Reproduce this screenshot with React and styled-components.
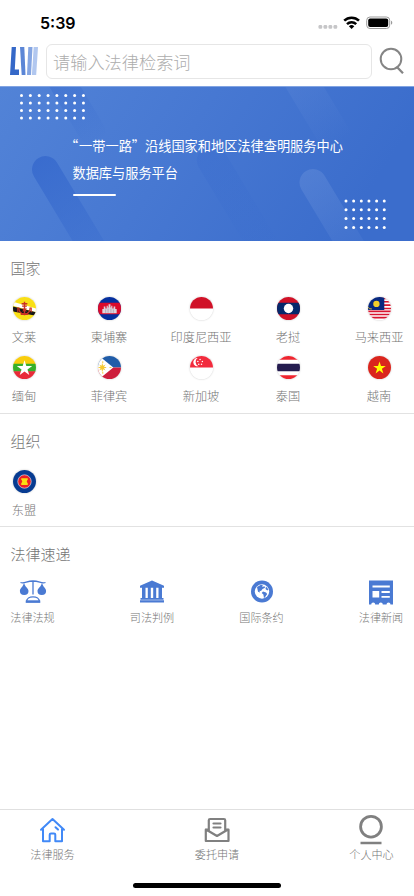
import React from 'react';
import styled, { createGlobalStyle } from 'styled-components';

const GlobalStyle = createGlobalStyle`
    * {
        box-sizing: border-box;
    }

    body {
        margin: 0;
        background-color: #fff;
        font-family: "Noto Sans CJK SC", sans-serif;
        font-weight: 300;
        color: #757575;
    }
`;

const Screen = styled.div`
    width: 414px;
    height: 896px;
    display: flex;
    flex-direction: column;
    overflow: hidden;
    background-color: #fff;
`;

const StatusBar = styled.div`
    height: 44px;
    display: flex;
    align-items: flex-start;
    justify-content: space-between;
    padding: 13px 20px 0 40px;
`;

const Time = styled.span`
    font-family: Inter, sans-serif;
    font-size: 16px;
    font-weight: 600;
    line-height: 20px;
    color: #000;
`;

const SearchBar = styled.div`
    height: 42px;
    display: flex;
    align-items: flex-start;
    padding-left: 10px;
`;

const Logo = styled.svg`
    width: 28px;
    height: 29px;
    margin: 3px 8px 0 0;
`;

const SearchInput = styled.input`
    width: 326px;
    height: 35px;
    padding: 0 6px 1px;
    border: 1px solid #e6e6e6;
    border-radius: 6px;
    outline: none;
    font-family: inherit;
    font-size: 17.2px;
    font-weight: 300;
    background-color: #fff;

    &::placeholder {
        color: #adadad;
        opacity: 1;
    }
`;

const SearchIcon = styled.svg`
    width: 26px;
    height: 28px;
    margin: 3px 0 0 7px;
`;

const Banner = styled.div`
    height: 155px;
    flex: none;
    display: grid;
    overflow: hidden;

    > * {
        grid-area: 1 / 1;
    }
`;

const BannerText = styled.div`
    z-index: 1;
    padding: 47px 0 0 72.5px;
    font-size: 13.2px;
    font-weight: 400;
    line-height: 26.5px;
    color: #fff;
    white-space: nowrap;
    text-spacing-trim: space-all;
`;

const OpenQuote = styled.span`
    margin-left: -7.5px;
    margin-right: 0.9px;
`;

const Underline = styled.div`
    width: 43px;
    height: 2px;
    margin-top: 7.5px;
    border-radius: 1px;
    background-color: #fff;
`;

const Section = styled.section`
    height: ${props => props.$height}px;
    flex: none;
    border-bottom: ${props => props.$last ? 'none' : '1px solid #e2e2e2'};
`;

const Title = styled.h2`
    height: 55px;
    margin: 0;
    padding: 15px 0 0 10.5px;
    font-size: 15px;
    font-weight: 300;
    line-height: 23px;
`;

const FlagGrid = styled.div`
    display: grid;
    grid-template-columns: 48px 122px 62px 112px 70px;
    grid-auto-rows: 59px;
    justify-items: center;
`;

const FlagItem = styled.div`
    display: flex;
    flex-direction: column;
    align-items: center;
    font-size: 12.2px;
    line-height: 18px;
    white-space: nowrap;
`;

const FlagIcon = styled.svg`
    width: 23px;
    height: 23px;
    margin: 1px 0 8px;
    border-radius: 50%;
    box-shadow: 0 0 2px rgba(0, 0, 0, 0.25);
`;

const ServiceGrid = styled.div`
    display: grid;
    grid-template-columns: 119.5px 109.5px 119.5px 44px;
    margin-top: -3px;
    padding-left: 10.5px;
`;

const ServiceItem = styled.div`
    width: 44px;
    display: flex;
    flex-direction: column;
    align-items: center;
    font-size: 11.1px;
    line-height: 16px;
    white-space: nowrap;
`;

const ServiceIcon = styled.svg`
    width: 28px;
    height: 26px;
    margin-bottom: 4px;
    fill: #4a7ad3;
`;

const TabBar = styled.nav`
    height: 87px;
    margin-top: auto;
    border-top: 1px solid #e0e0e0;
    display: flex;
    flex-direction: column;
`;

const Tabs = styled.div`
    display: grid;
    grid-template-columns: 105px 224px 85px;
    justify-items: center;
`;

const Tab = styled.div`
    display: flex;
    flex-direction: column;
    align-items: center;
    font-size: 11.1px;
    line-height: 16px;
`;

const TabIcon = styled.svg`
    width: 28px;
    height: 32px;
    margin: 4px 0 0;
    fill: none;
    stroke: ${props => props.$active ? '#4189f7' : '#808080'};
    stroke-width: 2;
    stroke-linejoin: round;
    stroke-linecap: round;
`;

const HomeIndicator = styled.div`
    width: 148px;
    height: 5px;
    margin: auto auto 8px;
    border-radius: 3px;
    background-color: #000;
`;

const STAR = 'M0-1 L.225-.309 .951-.309 .363.118 .588.809 0 .382 -.588.809 -.363.118 -.951-.309 -.225-.309Z';

const flags = {
    brunei: (
        <>
            <path fill="#f9df16" d="M0 0h24v24H0z" />
            <path fill="#fff" d="M0 5l24 7v4L0 9z" />
            <path fill="#161616" d="M0 10l24 6v3.500L0 15z" />
            <g stroke="#c93024" fill="none" strokeWidth="1.5">
                <path d="M6 11c0 9 12 9 12 0M12 5v14M9 7h6M9.500 9.500h5M8 18h8" />
                <path d="M5 11v5M19 11v5M10 12l4 3M14 12l-4 3" strokeWidth="1.2" />
            </g>
        </>
    ),
    cambodia: (
        <>
            <path fill="#052f9e" d="M0 0h24v24H0z" />
            <path fill="#dc0b2b" d="M0 6h24v12H0z" />
            <path fill="#ded5dc" d="M4.500 17v-4.500H6V10h1.700v2H9V9h1.200v2h.8V7.500h2V11h.8V9H15v3h1.300v-2H18v2.500h1.500V17z" />
            <path stroke="#8f7892" strokeWidth=".5" d="M8 13v3.500M10.500 12v4.500M13.500 12v4.500M16 13v3.500" />
        </>
    ),
    indonesia: (
        <>
            <path fill="#fff" d="M0 0h24v24H0z" />
            <path fill="#d01127" d="M0 0h24v12H0z" />
        </>
    ),
    laos: (
        <>
            <path fill="#d01127" d="M0 0h24v24H0z" />
            <path fill="#06286b" d="M0 6h24v12H0z" />
            <circle cx="12" cy="12" r="4.9" fill="#fff" />
        </>
    ),
    malaysia: (
        <>
            <path fill="#fff" d="M0 0h24v24H0z" />
            <path stroke="#d8152f" strokeWidth="1.7" d="M12 1.500h12M12 5h12M12 8.500h12M12 12h12M0 15h24M0 18.300h24M0 21.500h24" />
            <path fill="#08297f" d="M0 0h17v13.500H0z" />
            <circle cx="8.800" cy="7.200" r="3.300" fill="#f5cf2a" />
            <path fill="none" stroke="#e8c629" d="M4 12.500q-3 .5-4-2" />
        </>
    ),
    myanmar: (
        <>
            <path fill="#f9cd0c" d="M0 0h24v9H0z" />
            <path fill="#36b02b" d="M0 8h24v8.500H0z" />
            <path fill="#e82b38" d="M0 16h24v8H0z" />
            <path fill="#fff" transform="translate(12 13) scale(8.500)" d={STAR} />
        </>
    ),
    philippines: (
        <>
            <path fill="#205ca8" d="M0 0h24v12H0z" />
            <path fill="#cd1d3b" d="M0 12h24v12H0z" />
            <path fill="#fff" d="M0-1l16 13L0 25z" />
            <circle cx="4.500" cy="12" r="2.400" fill="#f5ca32" />
            <path stroke="#f5ca32" d="M4.500 8v8M.500 12h8M1.700 9.200l5.600 5.600M1.700 14.800l5.600-5.600M5 5.500v2M5 16.500v2M12 12h2" />
        </>
    ),
    singapore: (
        <>
            <path fill="#fff" d="M0 0h24v24H0z" />
            <path fill="#f22b3d" d="M0 0h24v12H0z" />
            <path fill="#fff" d="M8 2.200a4.300 4.300 0 1 0 1 8.400 4.700 4.700 0 0 1-1-8.400z" />
            <g fill="#fff">
                <circle cx="10.500" cy="3.600" r=".8" />
                <circle cx="8.200" cy="5.700" r=".8" />
                <circle cx="12.900" cy="5.700" r=".8" />
                <circle cx="9.100" cy="8.500" r=".8" />
                <circle cx="12" cy="8.500" r=".8" />
            </g>
        </>
    ),
    thailand: (
        <>
            <path fill="#fff" d="M0 0h24v24H0z" />
            <path fill="#ee252f" d="M0 0h24v4H0zM0 20h24v4H0z" />
            <path fill="#241c4f" d="M0 8h24v8H0z" />
        </>
    ),
    vietnam: (
        <>
            <path fill="#da251d" d="M0 0h24v24H0z" />
            <path fill="#ff0" transform="translate(12 12.600) scale(6.900)" d={STAR} />
        </>
    ),
    asean: (
        <>
            <path fill="#073b91" d="M0 0h24v24H0z" />
            <circle cx="12" cy="12" r="7" fill="#ed1f24" stroke="#dbe0ee" strokeWidth=".7" />
            <path fill="#f8dc12" d="M8.600 8.500h6.800v1.800q-2 1.700 0 3.600v1.800H8.600v-1.800q2-1.900 0-3.600z" />
        </>
    ),
};

const countries = [
    { flag: 'brunei', name: '文莱' },
    { flag: 'cambodia', name: '柬埔寨' },
    { flag: 'indonesia', name: '印度尼西亚' },
    { flag: 'laos', name: '老挝' },
    { flag: 'malaysia', name: '马来西亚' },
    { flag: 'myanmar', name: '缅甸' },
    { flag: 'philippines', name: '菲律宾' },
    { flag: 'singapore', name: '新加坡' },
    { flag: 'thailand', name: '泰国' },
    { flag: 'vietnam', name: '越南' },
];

const organizations = [{ flag: 'asean', name: '东盟' }];

const services = [
    {
        name: '法律法规',
        icon: (
            <>
                <path fill="none" stroke="#4a7ad3" strokeWidth="1.300" d="M1.500 3.500c4 1.500 6-1.500 12.500-1.500s8.500 3 12.500 1.500M14 2v13.500" />
                <path d="M5 3.500c.7 4.500 4.500 5.500 4.500 8.600a4.300 3.900 0 0 1-8.600 0C.9 9 4.300 8 5 3.500zM23 3.500c.7 4.500 4.100 5.500 4.100 8.600a4.300 3.900 0 0 1-8.600 0c0-3.100 3.800-4.100 4.500-8.600z" />
                <path fill="none" stroke="#4a7ad3" strokeWidth="1.400" d="M7.500 23c0-6.800 13-6.800 13 0z" />
                <path d="M6.800 21.300h14.400v2.200H6.800z" />
            </>
        ),
    },
    {
        name: '司法判例',
        icon: (
            <>
                <path d="M14 1.500L26 6.700v2.100H2V6.700zM4 8.500h3.500V20H4zM9.800 8.500h3V20h-3zM15.200 8.500h3V20h-3zM20.500 8.500H24V20h-3.500zM2.500 19h23v1.800h-23zM2 21.200h24v2.300H2z" />
            </>
        ),
    },
    {
        name: '国际条约',
        icon: (
            <>
                <circle cx="14" cy="12.500" r="11" />
                <circle cx="14" cy="12.500" r="7.200" fill="#fff" />
                <path transform="translate(0 -.5)" d="M9 8.500l4-2.300 2 .7-1 1.600 2.500-.8.500 1.600-2.500 1.200-1.500 2-1.500-.3.500 1.800-2-.7zM15 13l3 1 1.200 1.500-1.700 2.500-1.500 1.800-.6-3.800-1.700-1.500zM18 8l2.500 3-1.200 1-1.800-1.500z" />
            </>
        ),
    },
    {
        name: '法律新闻',
        icon: (
            <>
                <path d="M2 1.500h24v24h-2.500a2 2 0 0 0-4 0h-3.700a2 2 0 0 0-4 0H8.200a2 2 0 0 0-4 0H2z" />
                <path fill="#fff" d="M5.500 6.500h17.300v2H5.500zM5.500 12h6.700v6.500H5.500zM14.500 12h8.300v2h-8.300zM14.500 17h8.300v1.800h-8.300z" />
            </>
        ),
    },
];

const tabs = [
    {
        name: '法律服务',
        active: true,
        icon: (
            <path d="M3 15.700L14.500 5 26 15.700M5 14v13.300h6.700v-6.500q0-1.300 1.300-1.300h3q1.300 0 1.300 1.300v6.500H24V14M17.500 13.300l2.500 2.300" />
        ),
    },
    {
        name: '委托申请',
        icon: (
            <path strokeWidth="2.200" d="M5.800 17V6.300q0-1.300 1.300-1.300h13.800q1.300 0 1.300 1.300V17M5.500 15.500H2.800v11.500h22.700V15.500h-3M3 15.500L14 22l11-6.500M10.500 9.500h7M10.500 13.500h7" />
        ),
    },
    {
        name: '个人中心',
        icon: (
            <>
                <circle cx="14" cy="12.700" r="10.400" strokeWidth="2.800" />
                <path d="M3.500 29h21" strokeWidth="2.500" strokeLinecap="butt" />
            </>
        ),
    },
];

const StatusIcons = () => (
    <svg width="76" height="20" viewBox="318 13 76 20">
        <g fill="#c6c6c8">
            <rect x="318.500" y="25.100" width="3.700" height="3.700" rx="1.200" />
            <rect x="323.500" y="25.100" width="3.700" height="3.700" rx="1.200" />
            <rect x="328.500" y="25.100" width="3.700" height="3.700" rx="1.200" />
            <rect x="333.500" y="25.100" width="3.700" height="3.700" rx="1.200" />
        </g>
        <g fill="none" stroke="#000" strokeWidth="2.500">
            <path d="M344.200 20.700a10.500 10.500 0 0 1 14.800 0" />
            <path d="M347 24.100a6.600 6.600 0 0 1 9.200 0" />
        </g>
        <path d="M348.900 26.200a3.900 3.900 0 0 1 5.400 0l-2.700 2.800z" />
        <rect x="366.700" y="17" width="23" height="11.500" rx="3.300" fill="none" stroke="#9b9b9b" />
        <rect x="368.200" y="18.500" width="20" height="8.500" rx="1.900" />
        <path d="M391 20.800c1.700.4 1.700 3.400 0 3.900z" fill="#9b9b9b" />
    </svg>
);

const Dots = ({ x, y, cols, rows, dx, dy }) => (
    <g fill="#fff">
        {Array.from({ length: cols * rows }, (_, i) => (
            <circle key={i} cx={x + (i % cols) * dx} cy={y + Math.floor(i / cols) * dy} r="1.5" />
        ))}
    </g>
);

const BannerArt = () => (
    <svg width="414" height="155" viewBox="0 0 414 155">
        <defs>
            <linearGradient id="sky" x2="1" y2=".25">
                <stop offset="0" stopColor="#5283d7" />
                <stop offset=".5" stopColor="#4778d2" />
                <stop offset="1" stopColor="#3b6dcc" />
            </linearGradient>
            <linearGradient id="dark" x2="0" y2="1">
                <stop offset="0" stopColor="#3669cd" stopOpacity=".85" />
                <stop offset="1" stopColor="#3669cd" stopOpacity="0" />
            </linearGradient>
            <linearGradient id="light" x2="0" y2="1">
                <stop offset="0" stopColor="#608ad8" stopOpacity=".55" />
                <stop offset="1" stopColor="#608ad8" stopOpacity="0" />
            </linearGradient>
        </defs>
        <path fill="url(#sky)" d="M0 0h414v155H0z" />
        <rect width="27" height="160" rx="13.5" fill="url(#dark)" transform="translate(27 79) rotate(-31)" />
        <rect width="27" height="95" rx="13" fill="url(#dark)" opacity=".6" transform="translate(38 -18) rotate(-31)" />
        <rect width="30" height="130" rx="13" fill="url(#dark)" opacity=".35" transform="translate(192 70) rotate(-31)" />
        <rect width="27" height="130" rx="13.5" fill="url(#light)" transform="translate(294.5 92) rotate(-31)" />
        <rect width="33" height="85" fill="url(#light)" opacity=".6" transform="translate(280 -8) rotate(-31)" />
        <Dots x={21.500} y={9.500} cols={8} rows={4} dx={8.850} dy={7.500} />
        <Dots x={346} y={115} cols={6} rows={4} dx={7.650} dy={8.800} />
        <path fill="#82a4e2" d="M0 0h414v1H0z" />
    </svg>
);

const Flags = ({ items }) => (
    <FlagGrid>
        {items.map(item => (
            <FlagItem key={item.name}>
                <FlagIcon viewBox="0 0 24 24">{flags[item.flag]}</FlagIcon>
                {item.name}
            </FlagItem>
        ))}
    </FlagGrid>
);

const App = () => {

    const [keyword, setKeyword] = React.useState('');

    return (
        <React.Fragment>
            <GlobalStyle />
            <Screen>
                <StatusBar>
                    <Time>5:39</Time>
                    <StatusIcons />
                </StatusBar>
                <SearchBar>
                    <Logo viewBox="0 0 28 29">
                        <path fill="#3568c8" d="M1.700 0H6L4.800 22.500H9V28H0z" />
                        <path fill="#5b86d6" d="M10 0h4.300l1.200 28h-3.800z" />
                        <path fill="#84a5e2" d="M18.300 0h4.200L21 28h-4z" />
                        <path fill="#b1c7ef" d="M23.700 0H28l-1.800 28h-4.300z" />
                    </Logo>
                    <SearchInput
                        placeholder="请输入法律检索词"
                        value={keyword}
                        onChange={(e) => setKeyword(e.target.value)}
                    />
                    <SearchIcon viewBox="0 0 26 28" fill="none" stroke="#858585" strokeWidth="2">
                        <circle cx="12" cy="12" r="10.300" />
                        <path d="M18.200 20.300l5.800 6" strokeWidth="2.300" />
                    </SearchIcon>
                </SearchBar>
                <Banner>
                    <BannerArt />
                    <BannerText>
                        <div><OpenQuote>“</OpenQuote>一带一路”沿线国家和地区法律查明服务中心</div>
                        <div>数据库与服务平台</div>
                        <Underline />
                    </BannerText>
                </Banner>
                <Section $height={173}>
                    <Title>国家</Title>
                    <Flags items={countries} />
                </Section>
                <Section $height={113}>
                    <Title>组织</Title>
                    <Flags items={organizations} />
                </Section>
                <Section $height={110} $last>
                    <Title>法律速递</Title>
                    <ServiceGrid>
                        {services.map(service => (
                            <ServiceItem key={service.name}>
                                <ServiceIcon viewBox="0 0 28 26">{service.icon}</ServiceIcon>
                                {service.name}
                            </ServiceItem>
                        ))}
                    </ServiceGrid>
                </Section>
                <TabBar>
                    <Tabs>
                        {tabs.map(tab => (
                            <Tab key={tab.name}>
                                <TabIcon viewBox="0 0 28 32" $active={tab.active}>{tab.icon}</TabIcon>
                                {tab.name}
                            </Tab>
                        ))}
                    </Tabs>
                    <HomeIndicator />
                </TabBar>
            </Screen>
        </React.Fragment>
    )

}

export default App;
